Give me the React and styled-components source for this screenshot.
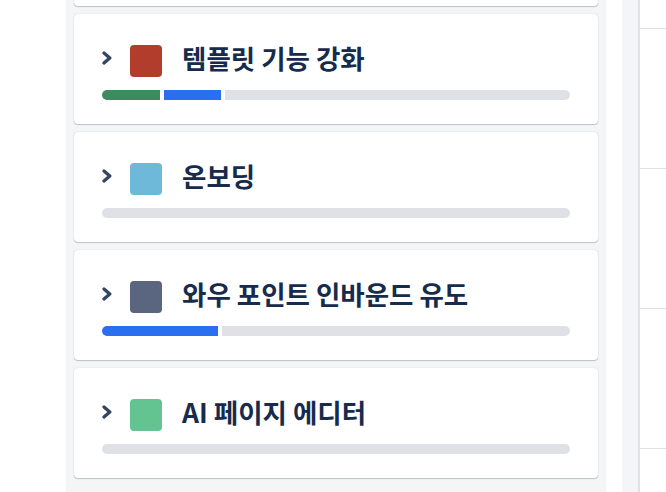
import React from "react";
import styled, { createGlobalStyle } from "styled-components";

const GlobalStyle = createGlobalStyle`
    html, body {
        margin: 0;
        padding: 0;
        background: #ffffff;
        font-family: "Noto Sans CJK KR", "Noto Sans", sans-serif;
    }
`;

// the first card is scrolled mostly out of view, only its bottom edge shows
const epics = [
    { name: "", color: "#8777d9", progress: [] },
    { name: "템플릿 기능 강화", color: "#b33d2d", progress: [{ w: 58, c: "#3d8c5f" }, { w: 57, c: "#2a6fef" }] },
    { name: "온보딩", color: "#6eb8da", progress: [] },
    { name: "와우 포인트 인바운드 유도", color: "#5a6580", progress: [{ w: 116, c: "#2a6fef" }] },
    { name: "AI 페이지 에디터", color: "#63c492", progress: [] },
];

const Chevron = () => (
    <ChevronIcon viewBox="0 0 10 14">
        <path d="M2 2 L7.8 7 L2 12" fill="none" stroke="#344563" strokeWidth="3.3" strokeLinecap="round" strokeLinejoin="round" />
    </ChevronIcon>
);

function EpicCard({ name, color, progress }) {
    return (
        <Card>
            <Header>
                <Chevron />
                <Swatch $color={color} />
                {name && <Title>{name}</Title>}
            </Header>
            <Bar>
                {progress.map((seg, i) => (
                    <Segment key={i} $w={seg.w} $color={seg.c} />
                ))}
                <Remaining />
            </Bar>
        </Card>
    );
}

export default function App() {
    return (
        <>
            <GlobalStyle />
            <Page>
                <Gutter />
                <Panel>
                    <CardList>
                        {epics.map((e, i) => (
                            <EpicCard key={i} {...e} />
                        ))}
                    </CardList>
                </Panel>
                <Gap />
                <Strip />
                <Timeline>
                    <Rows>
                        {[0, 1, 2, 3, 4].map(i => <Row key={i} />)}
                    </Rows>
                </Timeline>
            </Page>
        </>
    );
}

const Page = styled.div`
    display: flex;
    width: 666px;
    height: 492px;
    overflow: hidden;
`;

const Gutter = styled.div`
    flex: 0 0 66px;
`;

const Panel = styled.div`
    flex: 0 0 540px;
    background: #f4f5f7;
    padding: 0 8px;
    box-sizing: border-box;
    overflow: hidden;
`;

const CardList = styled.div`
    display: flex;
    flex-direction: column;
    gap: 8px;
    margin-top: -104px;
`;

const Card = styled.div`
    height: 110px;
    box-sizing: border-box;
    background: #ffffff;
    border-radius: 4px;
    box-shadow: 0 1px 1px rgba(9, 30, 66, 0.22), 0 0 1px rgba(9, 30, 66, 0.26);
    padding: 31px 28px 0 27px;
    display: flex;
    flex-direction: column;
    gap: 13px;
`;

const Header = styled.div`
    display: flex;
    align-items: center;
    height: 32px;
`;

const ChevronIcon = styled.svg`
    width: 10px;
    height: 14px;
    flex: 0 0 10px;
    margin: -6px 18px 0 1px;
`;

const Swatch = styled.div`
    width: 32px;
    height: 32px;
    flex: 0 0 32px;
    border-radius: 4px;
    background: ${props => props.$color};
    margin-right: 20px;
`;

const Title = styled.div`
    font-size: 26.5px;
    font-weight: 700;
    color: #172b4d;
    white-space: nowrap;
    line-height: 32px;
    margin-top: -7px;
`;

const Bar = styled.div`
    display: flex;
    gap: 4px;
    height: 10px;
    margin-left: 1px;
    border-radius: 5px;
    overflow: hidden;
`;

const Segment = styled.div`
    flex: 0 0 ${props => props.$w}px;
    background: ${props => props.$color};
`;

const Remaining = styled.div`
    flex: 1;
    background: #dfe1e6;
`;

const Gap = styled.div`
    flex: 0 0 16px;
`;

const Strip = styled.div`
    flex: 0 0 16px;
    background: #f4f5f7;
    border-right: 2px solid #dfe1e6;
`;

const Timeline = styled.div`
    flex: 1;
    overflow: hidden;
`;

const Rows = styled.div`
    margin-top: -111px;
`;

const Row = styled.div`
    height: 139px;
    border-bottom: 1px solid #dfe1e6;
`;
